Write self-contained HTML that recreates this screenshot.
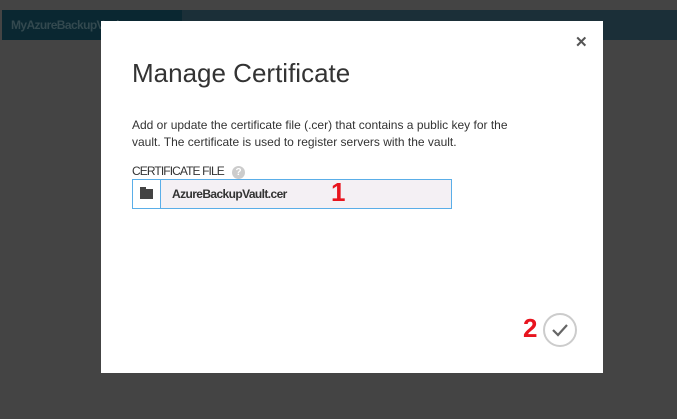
<!DOCTYPE html>
<html><head><style>
*{margin:0;padding:0;box-sizing:border-box}
body{width:677px;height:419px;background:#444;position:relative;overflow:hidden;font-family:"Liberation Sans",sans-serif}
.bar{position:absolute;left:2px;top:10px;width:675px;height:30px;background:#1b2f38}
.bar .l{position:absolute;left:0;top:0;width:180px;height:30px;background:#0a2731;color:#33494f;font-size:12px;line-height:30px;padding-left:9px;letter-spacing:-0.6px;font-weight:bold}
.dlg{position:absolute;left:101px;top:21px;width:502px;height:352px;background:#fff}
.x{position:absolute;left:474px;top:12px;font-size:15px;font-weight:bold;color:#555}
h1{position:absolute;left:31px;top:37px;font-size:26px;color:#333;letter-spacing:0px;font-weight:normal}
p{position:absolute;left:31px;top:96px;width:383px;font-size:12px;line-height:17px;color:#333;letter-spacing:0px}
.lbl{position:absolute;left:31px;top:143px;font-size:12px;color:#333;letter-spacing:-0.9px}
.q{position:absolute;left:131px;top:145px;width:13px;height:13px;border-radius:50%;background:#ccc;color:#fff;font-size:10px;font-weight:bold;text-align:center;line-height:13px}
.in{position:absolute;left:31px;top:158px;width:320px;height:30px;border:1px solid #5aaee8;background:#f4f0f4}
.in .ic{position:absolute;left:0;top:0;width:28px;height:28px;background:#fff;border-right:1px solid #5aaee8}
.in .ic i{position:absolute;left:7px;top:9px;width:13px;height:10px;background:#444}
.in .ic b{position:absolute;left:7px;top:7px;width:6px;height:3px;background:#444}
.in .t{position:absolute;left:39px;top:7px;font-size:12px;font-weight:bold;color:#333;letter-spacing:-0.6px}
.n{position:absolute;color:#e8141e;font-weight:bold;font-size:26px}
</style></head><body>
<div class="bar"><div class="l">MyAzureBackupVault</div></div>
<div class="dlg">
<div class="x">✕</div>
<h1>Manage Certificate</h1>
<p>Add or update the certificate file (.cer) that contains a public key for the vault. The certificate is used to register servers with the vault.</p>
<div class="lbl">CERTIFICATE FILE</div><div class="q">?</div>
<div class="in"><div class="ic"><b></b><i></i></div><div class="t">AzureBackupVault.cer</div></div>
<div class="n" style="left:230px;top:156px">1</div>
<div class="n" style="left:422px;top:292px">2</div>
<svg style="position:absolute;left:441px;top:291px" width="36" height="36"><circle cx="18" cy="18" r="16" fill="none" stroke="#ccc" stroke-width="2"/><path d="M11 18 L16 23 L25 13" fill="none" stroke="#666" stroke-width="2.2"/></svg>
</div>
</body></html>
